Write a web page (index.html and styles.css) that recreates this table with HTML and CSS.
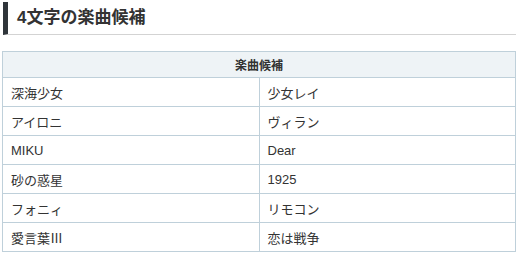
FILE: index.html
```html
<!DOCTYPE html>
<html lang="ja">
<head>
<meta charset="utf-8">
<link rel="stylesheet" href="styles.css">
</head>
<body>
<h2 class="heading">4文字の楽曲候補</h2>
<table class="songs">
  <thead>
    <tr><th colspan="2">楽曲候補</th></tr>
  </thead>
  <tbody>
    <tr><td>深海少女</td><td>少女レイ</td></tr>
    <tr><td>アイロニ</td><td>ヴィラン</td></tr>
    <tr><td>MIKU</td><td>Dear</td></tr>
    <tr><td>砂の惑星</td><td>1925</td></tr>
    <tr><td>フォニィ</td><td>リモコン</td></tr>
    <tr><td>愛言葉Ⅲ</td><td>恋は戦争</td></tr>
  </tbody>
</table>
</body>
</html>
```

FILE: styles.css
```css
html, body {
  margin: 0;
  padding: 0;
  background: #fff;
}
body {
  padding: 2px 4px 0 2px;
  font-family: "Liberation Sans", "Noto Sans CJK JP", sans-serif;
  color: #333;
}
.heading {
  margin: 0 0 0 1px;
  height: 33px;
  box-sizing: border-box;
  border-left: 5px solid #2f353a;
  border-bottom: 1px solid #d3d3d3;
  padding-left: 9px;
  font-size: 17px;
  font-weight: bold;
  line-height: 32px;
  color: #333;
}
.songs {
  margin-top: 16px;
  width: 514px;
  border-collapse: collapse;
  table-layout: fixed;
  font-size: 13px;
}
.songs th,
.songs td {
  border: 1px solid #bfd0da;
  text-align: left;
  padding: 0 8px;
  color: #333;
}
.songs th {
  background: #eef3f6;
  text-align: center;
  font-size: 12px;
  font-weight: bold;
  height: 25px;
}
.songs td {
  height: 28px;
}
```
